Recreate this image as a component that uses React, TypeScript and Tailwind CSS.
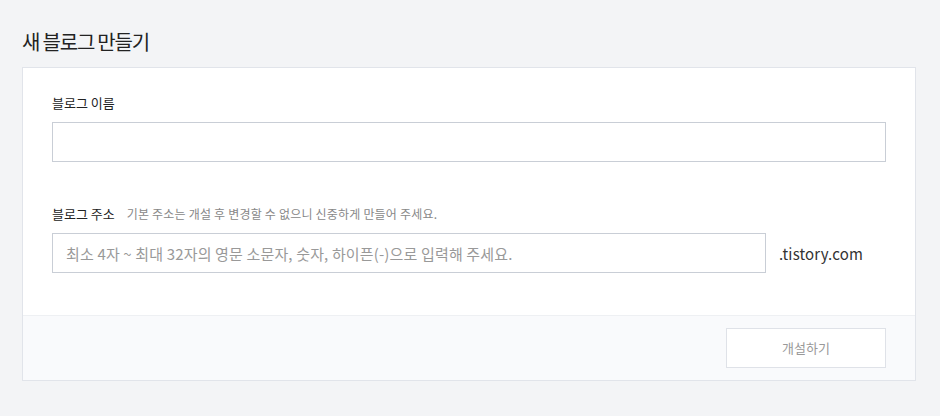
export default function App() {
  const font = { fontFamily: '"Noto Sans CJK KR", "Noto Sans", sans-serif' };
  return (
    <div className="w-[940px] h-[416px] bg-[#f3f4f6] pl-[22px] pr-[24px] pt-[29px] overflow-hidden" style={font}>
      <h1 className="text-[20px] leading-[26px] text-[#222] font-normal tracking-[-1.2px]">새 블로그 만들기</h1>
      <div className="mt-[12px] border border-[#e1e4ea] bg-white">
        <div className="px-[29px] pt-[25px] pb-[42px]">
          <div className="text-[13px] leading-[20px] text-[#222]">블로그 이름</div>
          <input className="mt-[9px] block w-full h-[40px] border border-[#c9ced6] bg-white outline-none px-[14px] text-[15px]" />
          <div className="mt-[42px] flex items-center text-[13px] leading-[20px]">
            <span className="text-[#222]">블로그 주소</span>
            <span className="ml-[12px] text-[12px] tracking-[0.2px] text-[#888]">기본 주소는 개설 후 변경할 수 없으니 신중하게 만들어 주세요.</span>
          </div>
          <div className="mt-[9px] flex items-center">
            <input
              className="block w-[714px] h-[40px] border border-[#c9ced6] bg-white outline-none px-[13px] text-[15px] tracking-[0.15px] text-[#333] placeholder:text-[#999]"
              placeholder="최소 4자 ~ 최대 32자의 영문 소문자, 숫자, 하이픈(-)으로 입력해 주세요."
              style={font}
            />
            <span className="ml-[13px] text-[15px] tracking-[0.15px] text-[#333] pt-[3px]">.tistory.com</span>
          </div>
        </div>
        <div className="border-t border-[#eef0f3] bg-[#f9fafc] flex justify-end pr-[29px] pt-[12px] pb-[12px]">
          <button className="w-[160px] h-[40px] border border-[#dfe2e8] bg-white text-[13px] text-[#999]" style={font}>개설하기</button>
        </div>
      </div>
    </div>
  );
}
